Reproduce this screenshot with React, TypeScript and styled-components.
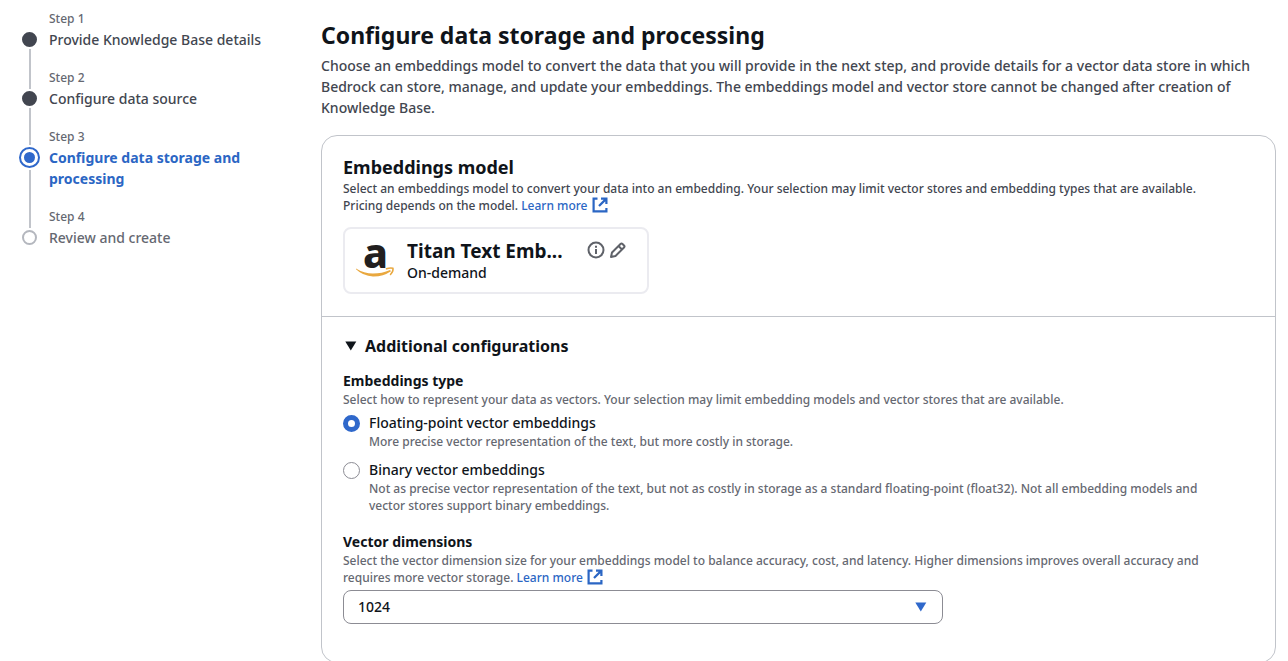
import React, { useState } from "react";
import styled, { createGlobalStyle } from "styled-components";

const color = {
  text: "#0f141a",
  body: "#424650",
  muted: "#656871",
  link: "#2b66c4",
  accent: "#2f68cb",
  line: "#c1c4ca",
  dot: "#424650",
};

const GlobalStyle = createGlobalStyle`
  * { box-sizing: border-box; }
  body {
    margin: 0;
    background: #fff;
    color: ${color.text};
    font-family: "Noto Sans", "Open Sans", sans-serif;
    font-size: 14px;
    font-weight: 500;
    line-height: 20px;
  }
  h1, h2, h3, p, ol, fieldset { margin: 0; padding: 0; border: 0; }
  button, select, input { font: inherit; color: inherit; }
`;

const Page = styled.div`
  display: grid;
  grid-template-columns: 321px minmax(0, 1fr);
  padding-right: 12px;
`;

const Steps = styled.ol`
  list-style: none;
  padding: 9px 48px 0 19px;
`;

const Step = styled.li`
  display: flex;
  gap: 9px;
`;

const Track = styled.div`
  display: flex;
  flex: none;
  flex-direction: column;
  align-items: center;
  gap: 2px;
  width: 21px;
`;

const Lead = styled.span<{ $active: boolean; $hidden: boolean }>`
  flex: none;
  width: 2px;
  height: ${(p) => (p.$active ? 18 : 21)}px;
  background: ${(p) => (p.$hidden ? "transparent" : color.line)};
`;

const Trail = styled.span`
  flex: 1;
  width: 2px;
  background: ${color.line};
`;

type State = "done" | "active" | "todo";

const Dot = styled.span<{ $state: State }>`
  flex: none;
  display: grid;
  place-items: center;
  width: ${(p) => (p.$state === "active" ? 21 : 15)}px;
  height: ${(p) => (p.$state === "active" ? 21 : 15)}px;
  border-radius: 50%;
  border: 2px solid
    ${(p) => ({ done: color.dot, active: color.accent, todo: "#b4b7be" })[p.$state]};
  background: ${(p) => (p.$state === "done" ? color.dot : "#fff")};

  &::after {
    content: "";
    width: 11px;
    height: 11px;
    border-radius: 50%;
    background: ${(p) => (p.$state === "active" ? color.accent : "transparent")};
  }
`;

const StepText = styled.div<{ $last: boolean }>`
  padding-bottom: ${(p) => (p.$last ? 0 : 18)}px;
`;

const StepLabel = styled.div`
  font-size: 12px;
  line-height: 20px;
  color: ${color.muted};
`;

const StepTitle = styled.div<{ $state: State }>`
  font-size: 14px;
  line-height: 21px;
  font-weight: ${(p) => (p.$state === "active" ? 700 : 500)};
  color: ${(p) => ({ done: color.body, active: color.link, todo: color.muted })[p.$state]};
`;

const Main = styled.main`
  padding: 20px 0 24px;
`;

const Title = styled.h1`
  font-size: 23px;
  line-height: 30px;
`;

const Intro = styled.p`
  margin-top: 5px;
  font-size: 14px;
  line-height: 21px;
  color: ${color.body};
`;

const Card = styled.section`
  margin-top: 17px;
  border: 1px solid ${color.line};
  border-radius: 16px;
`;

const CardTop = styled.div`
  padding: 19px 21px 22px;
  border-bottom: 1px solid ${color.line};
`;

const CardBody = styled.div`
  padding: 18px 21px 38px;
`;

const SectionTitle = styled.h2`
  font-size: 18px;
  line-height: 25px;
`;

const Description = styled.p<{ $muted?: boolean }>`
  padding-right: 24px;
  font-size: 12px;
  line-height: 17px;
  color: ${(p) => (p.$muted ? color.muted : color.body)};
`;

const Link = styled.a`
  color: ${color.link};
  text-decoration: none;

  svg { vertical-align: top; }
`;

const Model = styled.div`
  display: flex;
  align-items: flex-start;
  width: 306px;
  margin-top: 13px;
  padding: 10px 20px 10px 10px;
  border: 2px solid #ebebf0;
  border-radius: 8px;
`;

const ModelText = styled.div`
  flex: 1;
  min-width: 0;
  margin-left: 12px;
`;

const ModelName = styled.div`
  font-size: 19px;
  line-height: 24px;
  font-weight: 700;
`;

const ModelMode = styled.div`
  font-size: 14px;
  line-height: 19px;
`;

const ModelActions = styled.div`
  display: flex;
  gap: 4px;
  padding-top: 2px;
`;

const IconButton = styled.button`
  display: grid;
  place-items: center;
  padding: 0;
  border: 0;
  background: none;
  color: #5f6269;
  cursor: pointer;
`;

const Expander = styled.button`
  display: flex;
  align-items: center;
  gap: 8px;
  padding: 0 0 0 2px;
  border: 0;
  background: none;
  font-size: 16px;
  line-height: 22px;
  font-weight: 700;
  cursor: pointer;
`;

const Group = styled.fieldset`
  margin-top: 14px;
  min-width: 0;
`;

const Field = styled.div`
  margin-top: 18px;
`;

const FieldTitle = styled.div`
  display: block;
  font-size: 14px;
  line-height: 20px;
  font-weight: 700;
`;

const Option = styled.label`
  display: grid;
  grid-template-columns: 17px minmax(0, 1fr);
  column-gap: 9px;
  align-items: center;
  padding-top: 5px;

  & + & { padding-top: 10px; }
`;

const Radio = styled.input`
  appearance: none;
  width: 17px;
  height: 17px;
  margin: 0;
  border: 1px solid #8c8c94;
  border-radius: 50%;
  background: #fff;

  &:checked { border: 5px solid ${color.accent}; }
`;

const OptionHint = styled(Description)`
  grid-column: 2;
`;

const SelectBox = styled.div`
  position: relative;
  max-width: 600px;
  margin-top: 4px;
`;

const Select = styled.select`
  display: block;
  appearance: none;
  width: 100%;
  height: 34px;
  padding: 0 40px 0 14px;
  border: 1px solid #8c8c94;
  border-radius: 8px;
  background: #fff;
  font-size: 14px;
`;

const Caret = styled.svg`
  position: absolute;
  right: 16px;
  top: 12px;
  pointer-events: none;
`;

const Triangle = ({ open }: { open: boolean }) => (
  <svg width="12" height="10" viewBox="0 0 12 10" aria-hidden="true">
    <path d={open ? "M0.3 0.5h11L5.8 9.5z" : "M2 0l8 5-8 5z"} fill={color.text} />
  </svg>
);

const ExternalIcon = () => (
  <svg width="17" height="16" viewBox="0 0 17 16" fill="none" stroke="currentColor" strokeWidth="2.2" aria-hidden="true">
    <path d="M6.500 1.600H2.600V14.400H15.400V11" />
    <path d="M10 1.600h5.400V7M15.400 1.600L8 9" />
  </svg>
);

const InfoIcon = () => (
  <svg width="18" height="18" viewBox="0 0 18 18" fill="none" stroke="currentColor" strokeWidth="2" aria-hidden="true">
    <circle cx="9" cy="9" r="7.500" />
    <path d="M9 8v5M9 4.800v2" />
  </svg>
);

const EditIcon = () => (
  <svg width="18" height="18" viewBox="0 0 18 18" fill="none" stroke="currentColor" strokeWidth="2" strokeLinejoin="round" aria-hidden="true">
    <path d="M2 16l1-4.500 8.500-8.500q1-1 2 0l1.500 1.500q1 1 0 2L6.500 15z" />
    <path d="M9.500 5l3.500 3.500" />
  </svg>
);

const LogoSvg = styled.svg`
  overflow: visible;
`;

const AmazonLogo = () => (
  <LogoSvg width="40" height="38" viewBox="0 0 40 38" role="img" aria-label="Amazon">
    <text x="8" y="29" fontFamily="Noto Sans, sans-serif" fontWeight="800" fontSize="41" fill="#221f1f">a</text>
    <path d="M1 29.500Q9 34.600 18 34.600Q27 34.600 35 31L36 32.200Q28 37.600 18 37.400Q8 37 1 30.200z" fill="#e9a83f" />
    <path d="M31.500 29.800q4-1.500 6.500-.500.500 3-2.500 6.200" fill="none" stroke="#e9a83f" strokeWidth="1.500" strokeLinecap="round" strokeLinejoin="round" />
  </LogoSvg>
);

const LearnMore = () => (
  <Link href="#learn-more">
    Learn more <ExternalIcon />
  </Link>
);

const steps: { title: string; state: State }[] = [
  { title: "Provide Knowledge Base details", state: "done" },
  { title: "Configure data source", state: "done" },
  { title: "Configure data storage and processing", state: "active" },
  { title: "Review and create", state: "todo" },
];

export default function App() {
  const [open, setOpen] = useState(true);
  const [type, setType] = useState("float");

  return (
    <>
      <GlobalStyle />
      <Page>
        <nav aria-label="Steps">
          <Steps>
            {steps.map((s, i) => (
              <Step key={s.title} aria-current={s.state === "active" ? "step" : undefined}>
                <Track>
                  <Lead $active={s.state === "active"} $hidden={i === 0} />
                  <Dot $state={s.state} />
                  {i < steps.length - 1 && <Trail />}
                </Track>
                <StepText $last={i === steps.length - 1}>
                  <StepLabel>Step {i + 1}</StepLabel>
                  <StepTitle $state={s.state}>{s.title}</StepTitle>
                </StepText>
              </Step>
            ))}
          </Steps>
        </nav>
        <Main>
          <Title>Configure data storage and processing</Title>
          <Intro>
            Choose an embeddings model to convert the data that you will provide in the next step, and provide details
            for a vector data store in which Bedrock can store, manage, and update your embeddings. The embeddings model
            and vector store cannot be changed after creation of Knowledge Base.
          </Intro>
          <Card>
            <CardTop>
              <SectionTitle>Embeddings model</SectionTitle>
              <Description>
                Select an embeddings model to convert your data into an embedding. Your selection may limit vector
                stores and embedding types that are available. Pricing depends on the model. <LearnMore />
              </Description>
              <Model>
                <AmazonLogo />
                <ModelText>
                  <ModelName>Titan Text Emb...</ModelName>
                  <ModelMode>On-demand</ModelMode>
                </ModelText>
                <ModelActions>
                  <IconButton type="button" aria-label="Model details"><InfoIcon /></IconButton>
                  <IconButton type="button" aria-label="Change model"><EditIcon /></IconButton>
                </ModelActions>
              </Model>
            </CardTop>
            <CardBody>
              <Expander type="button" aria-expanded={open} onClick={() => setOpen(!open)}>
                <Triangle open={open} />
                Additional configurations
              </Expander>
              {open && (
                <>
                  <Group aria-labelledby="type-title">
                    <FieldTitle id="type-title">Embeddings type</FieldTitle>
                    <Description $muted>
                      Select how to represent your data as vectors. Your selection may limit embedding models and
                      vector stores that are available.
                    </Description>
                    <Option>
                      <Radio type="radio" name="type" checked={type === "float"} onChange={() => setType("float")} />
                      <span>Floating-point vector embeddings</span>
                      <OptionHint $muted>
                        More precise vector representation of the text, but more costly in storage.
                      </OptionHint>
                    </Option>
                    <Option>
                      <Radio type="radio" name="type" checked={type === "binary"} onChange={() => setType("binary")} />
                      <span>Binary vector embeddings</span>
                      <OptionHint $muted>
                        Not as precise vector representation of the text, but not as costly in storage as a standard
                        floating-point (float32). Not all embedding models and vector stores support binary embeddings.
                      </OptionHint>
                    </Option>
                  </Group>
                  <Field>
                    <FieldTitle as="label" htmlFor="dimensions">Vector dimensions</FieldTitle>
                    <Description $muted>
                      Select the vector dimension size for your embeddings model to balance accuracy, cost, and
                      latency. Higher dimensions improves overall accuracy and requires more vector storage.{" "}
                      <LearnMore />
                    </Description>
                    <SelectBox>
                      <Select id="dimensions" defaultValue="1024">
                        <option>1024</option>
                        <option>512</option>
                        <option>256</option>
                      </Select>
                      <Caret width="12" height="10" viewBox="0 0 12 10" aria-hidden="true">
                        <path d="M0.300 0.500h11L5.800 9.500z" fill={color.accent} />
                      </Caret>
                    </SelectBox>
                  </Field>
                </>
              )}
            </CardBody>
          </Card>
        </Main>
      </Page>
    </>
  );
}
